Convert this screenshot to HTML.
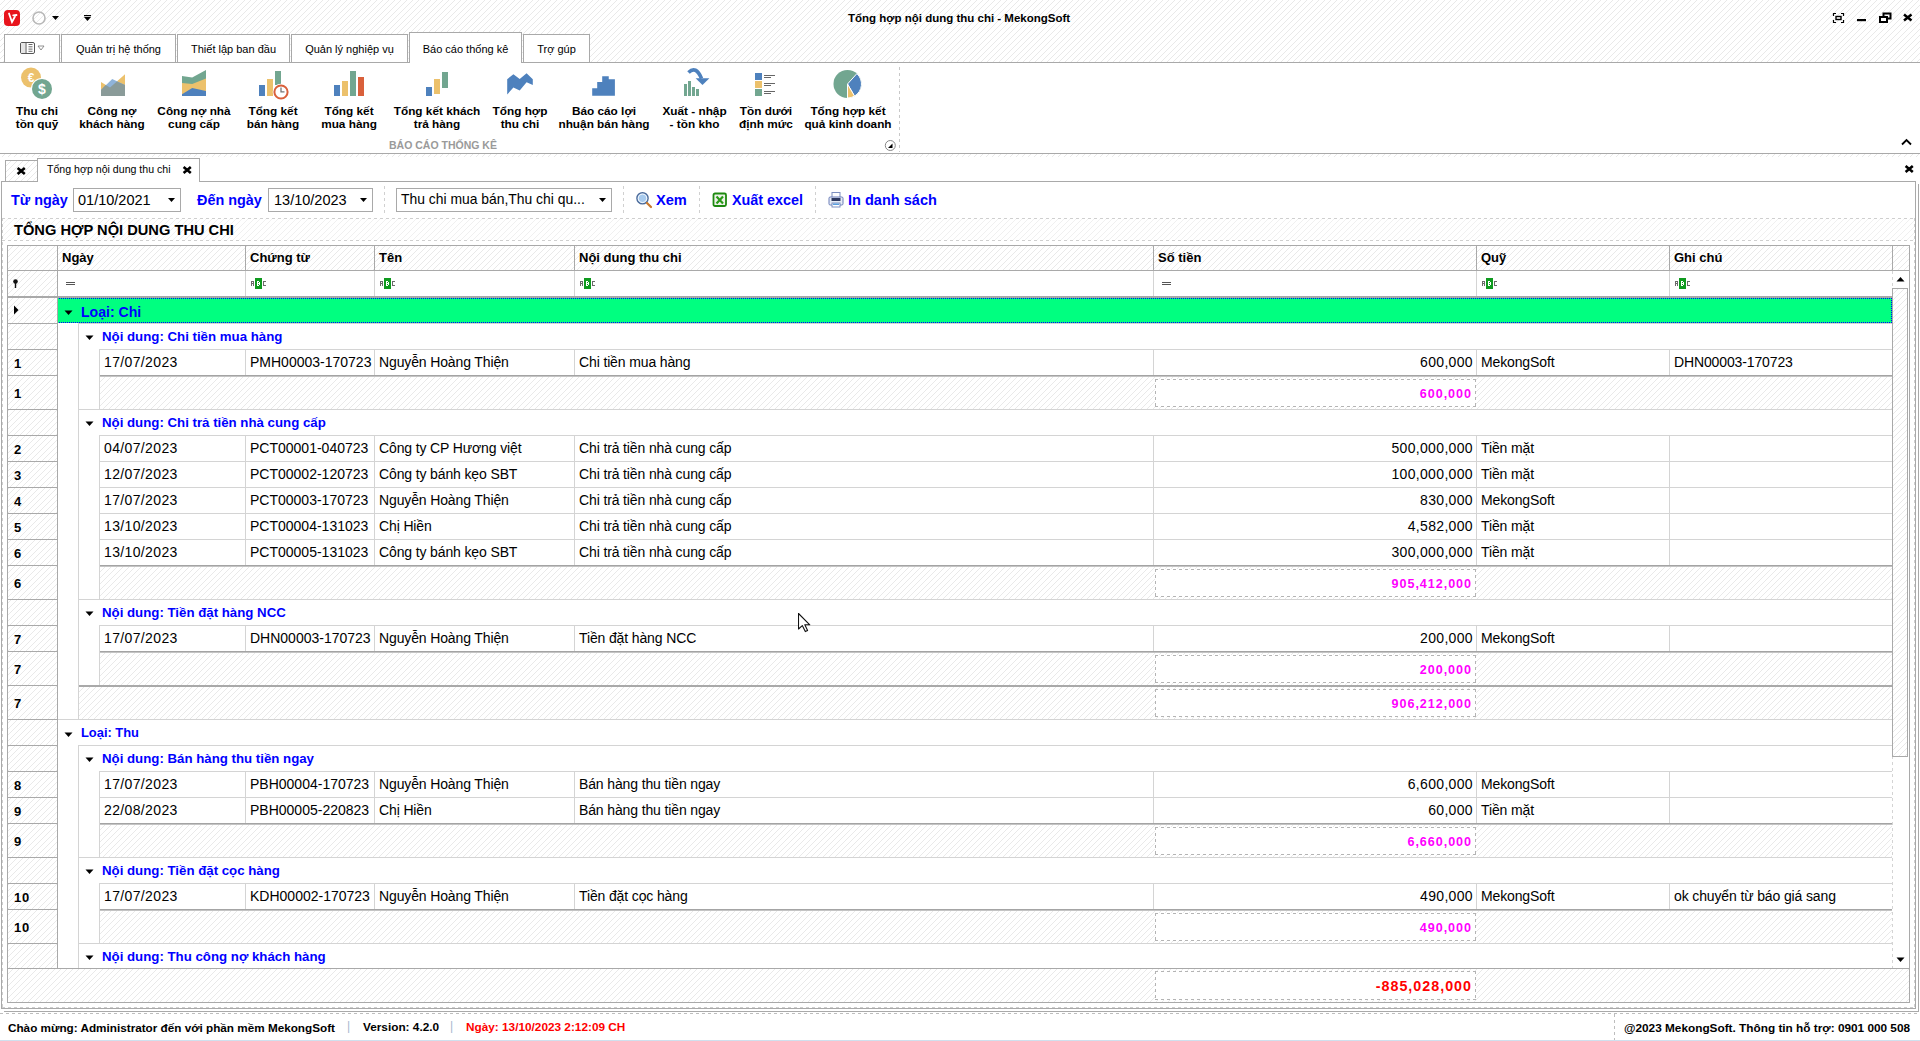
<!DOCTYPE html><html><head><meta charset="utf-8"><title>MekongSoft</title><style>
*{margin:0;padding:0;box-sizing:border-box}
html,body{width:1920px;height:1041px;overflow:hidden;background:#fff;font-family:"Liberation Sans",sans-serif;color:#000}
div{position:absolute}
.h{background:repeating-linear-gradient(135deg,#fff 0px,#fff 3.25px,#e9e9e9 3.25px,#e9e9e9 3.85px,#fff 3.85px,#fff 4.2426px)}
.h2{background:repeating-linear-gradient(135deg,#fff 0px,#fff 3.25px,#f0f0f0 3.25px,#f0f0f0 3.85px,#fff 3.85px,#fff 4.2426px)}
.t{white-space:nowrap;line-height:1}
.b{font-weight:bold}
</style></head><body>
<div class="h" style="left:0px;top:0px;width:1920px;height:62px;"></div>
<svg style="position:absolute;left:4px;top:10px" width="17" height="17" viewBox="0 0 17 17"><rect x="0" y="0" width="16" height="16" rx="4" fill="#e8141c"/><path d="M5 3.5 L8 12 L11.5 5.5 M9.2 5.4 L12.5 5" stroke="#fff" stroke-width="1.8" fill="none" stroke-linecap="round"/></svg>
<svg style="position:absolute;left:30px;top:9px" width="64" height="18" viewBox="0 0 64 18"><circle cx="9" cy="9" r="6" fill="none" stroke="#b8b8b8" stroke-width="1.6"/><path d="M22 7 L29 7 L25.5 11 Z" fill="#000"/><path d="M54 8 L61 8 L57.5 12 Z" fill="#000"/><rect x="54" y="6" width="7" height="1.2" fill="#000"/></svg>
<div class="t" style="left:848px;top:13px;font-size:11.5px;font-weight:bold">Tổng hợp nội dung thu chi - MekongSoft</div>
<svg style="position:absolute;left:1830px;top:10px" width="90" height="16" viewBox="0 0 90 16"><path d="M3.5 6 V3.5 H6 M11 3.5 H13.5 V6 M13.5 10 V12.5 H11 M6 12.5 H3.5 V10" stroke="#000" stroke-width="1.2" fill="none"/><rect x="6" y="6.5" width="5" height="3" fill="none" stroke="#000" stroke-width="1.4"/><rect x="27" y="9" width="9" height="2.2" fill="#000"/><rect x="53.5" y="3.5" width="7" height="5" fill="none" stroke="#000" stroke-width="2"/><rect x="50" y="7" width="7" height="5" fill="#fff" stroke="#000" stroke-width="2"/><path d="M74 4.5 L81.5 10.5 M81.5 4.5 L74 10.5" stroke="#000" stroke-width="2.5"/></svg>
<div style="left:4px;top:34px;width:56px;height:28px;background:#fff;border:1px solid #a9a9a9;border-bottom:none"></div>
<div style="left:61px;top:34px;width:115px;height:28px;background:#fff;border:1px solid #a9a9a9;border-bottom:none"></div>
<div class="t" style="left:61px;top:44px;width:115px;text-align:center;font-size:11px">Quản trị hệ thống</div>
<div style="left:177px;top:34px;width:113px;height:28px;background:#fff;border:1px solid #a9a9a9;border-bottom:none"></div>
<div class="t" style="left:177px;top:44px;width:113px;text-align:center;font-size:11px">Thiết lập ban đầu</div>
<div style="left:291px;top:34px;width:117px;height:28px;background:#fff;border:1px solid #a9a9a9;border-bottom:none"></div>
<div class="t" style="left:291px;top:44px;width:117px;text-align:center;font-size:11px">Quản lý nghiệp vụ</div>
<div style="left:409px;top:32px;width:113px;height:31px;background:#fff;border:1px solid #a9a9a9;border-bottom:none"></div>
<div class="t" style="left:409px;top:44px;width:113px;text-align:center;font-size:11px">Báo cáo thống kê</div>
<div style="left:523px;top:34px;width:67px;height:28px;background:#fff;border:1px solid #a9a9a9;border-bottom:none"></div>
<div class="t" style="left:523px;top:44px;width:67px;text-align:center;font-size:11px">Trợ gúp</div>
<svg style="position:absolute;left:19px;top:41px" width="28" height="14" viewBox="0 0 28 14"><rect x="1.5" y="1.5" width="14" height="11" rx="1.5" fill="#fff" stroke="#555" stroke-width="1"/><rect x="2" y="2" width="4" height="10" fill="#e6e6e6"/><line x1="7" y1="2" x2="7" y2="12" stroke="#555"/><path d="M9.5 3.5h4M9.5 5.8h4M9.5 8.1h4M9.5 10.3h4" stroke="#444" stroke-width="0.8"/><path d="M19 5 L25 5 L22 9 Z" fill="#fff" stroke="#777" stroke-width="0.8"/></svg>
<div style="left:0px;top:62px;width:410px;height:1px;background:#a9a9a9"></div>
<div style="left:521px;top:62px;width:1399px;height:1px;background:#a9a9a9"></div>
<div style="left:0px;top:153px;width:1920px;height:1px;background:#a9a9a9"></div>
<div class="t" style="left:-23px;top:106px;width:120px;text-align:center;font-size:11.8px;font-weight:bold">Thu chi</div>
<div class="t" style="left:-23px;top:119px;width:120px;text-align:center;font-size:11.8px;font-weight:bold">tồn quỹ</div>
<div class="t" style="left:52px;top:106px;width:120px;text-align:center;font-size:11.8px;font-weight:bold">Công nợ</div>
<div class="t" style="left:52px;top:119px;width:120px;text-align:center;font-size:11.8px;font-weight:bold">khách hàng</div>
<div class="t" style="left:134px;top:106px;width:120px;text-align:center;font-size:11.8px;font-weight:bold">Công nợ nhà</div>
<div class="t" style="left:134px;top:119px;width:120px;text-align:center;font-size:11.8px;font-weight:bold">cung cấp</div>
<div class="t" style="left:213px;top:106px;width:120px;text-align:center;font-size:11.8px;font-weight:bold">Tổng kết</div>
<div class="t" style="left:213px;top:119px;width:120px;text-align:center;font-size:11.8px;font-weight:bold">bán hàng</div>
<div class="t" style="left:289px;top:106px;width:120px;text-align:center;font-size:11.8px;font-weight:bold">Tổng kết</div>
<div class="t" style="left:289px;top:119px;width:120px;text-align:center;font-size:11.8px;font-weight:bold">mua hàng</div>
<div class="t" style="left:377px;top:106px;width:120px;text-align:center;font-size:11.8px;font-weight:bold">Tổng kết khách</div>
<div class="t" style="left:377px;top:119px;width:120px;text-align:center;font-size:11.8px;font-weight:bold">trả hàng</div>
<div class="t" style="left:460px;top:106px;width:120px;text-align:center;font-size:11.8px;font-weight:bold">Tổng hợp</div>
<div class="t" style="left:460px;top:119px;width:120px;text-align:center;font-size:11.8px;font-weight:bold">thu chi</div>
<div class="t" style="left:544px;top:106px;width:120px;text-align:center;font-size:11.8px;font-weight:bold">Báo cáo lợi</div>
<div class="t" style="left:544px;top:119px;width:120px;text-align:center;font-size:11.8px;font-weight:bold">nhuận bán hàng</div>
<div class="t" style="left:634.5px;top:106px;width:120px;text-align:center;font-size:11.8px;font-weight:bold">Xuất - nhập</div>
<div class="t" style="left:634.5px;top:119px;width:120px;text-align:center;font-size:11.8px;font-weight:bold">- tồn kho</div>
<div class="t" style="left:706px;top:106px;width:120px;text-align:center;font-size:11.8px;font-weight:bold">Tồn dưới</div>
<div class="t" style="left:706px;top:119px;width:120px;text-align:center;font-size:11.8px;font-weight:bold">định mức</div>
<div class="t" style="left:788px;top:106px;width:120px;text-align:center;font-size:11.8px;font-weight:bold">Tổng hợp kết</div>
<div class="t" style="left:788px;top:119px;width:120px;text-align:center;font-size:11.8px;font-weight:bold">quả kinh doanh</div>
<div class="t" style="left:343px;top:140px;width:200px;text-align:center;font-size:10.5px;font-weight:bold;color:#9a9a9a">BÁO CÁO THỐNG KÊ</div>
<svg style="position:absolute;left:0;top:62px" width="900" height="92" viewBox="0 62 900 92"><circle cx="31" cy="77.6" r="10" fill="#ecc16c"/><text x="31" y="82" font-family="Liberation Sans" font-weight="bold" font-size="12" fill="#fff" text-anchor="middle">€</text><circle cx="42" cy="88.9" r="11" fill="#fff"/><circle cx="42" cy="88.9" r="10" fill="#72a690"/><text x="42" y="94" font-family="Liberation Sans" font-weight="bold" font-size="14" fill="#fff" text-anchor="middle">$</text><polygon points="101,82 110,87.6 125,74.2 125,96 101,96" fill="#ecc16c"/><polygon points="101,90.1 112.2,78.9 125,85.1 125,96 101,96" fill="#8fb3d9"/><polygon points="101,90.1 105.6,85.1 110,87.6 116.9,81.4 125,85.1 125,96 101,96" fill="#8a9b99"/><polygon points="182,76 192.2,77.6 206,70.1 206,96 182,96" fill="#72a690"/><polygon points="182,82.9 192.2,83.9 206,78.6 206,96 182,96" fill="#ecc16c"/><polygon points="182,94.2 192.2,88 206,91 206,96 182,96" fill="#4e81bd"/><rect x="259" y="85" width="6" height="11" fill="#4e81bd"/><rect x="267" y="79" width="6" height="17" fill="#ecc16c"/><rect x="275" y="71" width="6" height="14" fill="#72a690"/><circle cx="281" cy="92" r="8.3" fill="#fff"/><circle cx="281" cy="92" r="6.6" fill="#fff" stroke="#d9603b" stroke-width="2"/><path d="M281 87.5 V91.8 H284.5" stroke="#777" stroke-width="1.3" fill="none"/><rect x="334" y="85" width="6" height="11" fill="#4e81bd"/><rect x="342" y="81" width="6" height="15" fill="#ecc16c"/><rect x="350" y="71" width="6" height="25" fill="#72a690"/><rect x="358" y="77" width="6" height="19" fill="#d9603b"/><rect x="426" y="87" width="6" height="9" fill="#4e81bd"/><rect x="434" y="79" width="6" height="15" fill="#ecc16c"/><rect x="442" y="72" width="6" height="16" fill="#72a690"/><polygon points="507.2,79.2 513.4,74.2 519.7,78.9 526.6,73.25 532.8,79.2 532.8,85.1 526.6,82.3 519.7,90.4 513.4,87.6 507.2,94.5" fill="#4e81bd"/><polygon points="592.2,88.25 597.2,88.25 597.2,82.1 602.2,82.1 602.2,76.25 608.75,76.25 608.75,79.2 614.9,79.2 614.9,95.75 592.2,95.75" fill="#4e81bd"/><rect x="684" y="84" width="3" height="12" fill="#72a690"/><rect x="688" y="81" width="3" height="15" fill="#72a690"/><rect x="692" y="87" width="3" height="9" fill="#72a690"/><rect x="696" y="89" width="3" height="7" fill="#72a690"/><path d="M688.5 72.5 Q696 65 701.5 78.5" stroke="#4e81bd" stroke-width="3.6" fill="none"/><polygon points="695.6,78.25 709.4,78.25 702.5,85.1" fill="#4e81bd"/><rect x="755" y="73" width="7" height="7" fill="#4e81bd"/><rect x="755" y="81" width="7" height="7" fill="#ecc16c"/><rect x="755" y="89" width="7" height="7" fill="#72a690"/><path d="M764 75.5h11M764 77.5h7M764 83.5h11M764 85.5h7M764 91.5h11M764 93.5h7" stroke="#666" stroke-width="1"/><circle cx="847.5" cy="84" r="14" fill="#72a690"/><path d="M847.5 84 L856.9 73.6 A14 14 0 0 1 854.5 96.1 Z" fill="#4e81bd" stroke="#fff" stroke-width="1"/><path d="M847.5 84 L854.5 96.1 A14 14 0 0 1 847.5 98 Z" fill="#ecc16c" stroke="#fff" stroke-width="1"/><circle cx="890.3" cy="145.5" r="5" fill="#fff" stroke="#888" stroke-width="1"/><polygon points="888,148 892.5,148 892.5,143.5" fill="#000"/><line x1="899.5" y1="67" x2="899.5" y2="152" stroke="#c8c8c8" stroke-width="1" stroke-dasharray="3,3"/></svg>
<svg style="position:absolute;left:1900px;top:137px" width="14" height="10" viewBox="0 0 14 10"><path d="M2 7.5 L6.5 3 L11 7.5" stroke="#000" stroke-width="1.8" fill="none"/></svg>
<div class="h" style="left:0px;top:154px;width:1920px;height:3px;"></div>
<div class="h" style="left:5px;top:160px;width:33px;height:22px;border:1px solid #a9a9a9;border-bottom:none"></div>
<svg style="position:absolute;left:16px;top:166px" width="12" height="10" viewBox="0 0 12 10"><path d="M1.6 2.0 L8.8 8.0 M8.8 2.0 L1.6 8.0" stroke="#000" stroke-width="2.6"/></svg>
<div style="left:37px;top:158px;width:163px;height:24px;background:#fff;border:1px solid #a9a9a9;border-bottom:none"></div>
<div class="t" style="left:47px;top:164px;font-size:10.6px">Tổng hợp nội dung thu chi</div>
<svg style="position:absolute;left:182px;top:165px" width="12" height="10" viewBox="0 0 12 10"><path d="M1.6 2.0 L8.8 8.0 M8.8 2.0 L1.6 8.0" stroke="#000" stroke-width="2.6"/></svg>
<svg style="position:absolute;left:1904px;top:164px" width="12" height="10" viewBox="0 0 12 10"><path d="M1.6 2.0 L8.8 8.0 M8.8 2.0 L1.6 8.0" stroke="#000" stroke-width="2.6"/></svg>
<div style="left:1px;top:181px;width:1915px;height:828px;background:#fff;border:1px solid #a9a9a9"></div>
<div style="left:1918px;top:184px;width:1px;height:828px;background:#a9a9a9"></div>
<div style="left:38px;top:181px;width:161px;height:1px;background:#fff"></div>
<div style="left:4px;top:1011px;width:1915px;height:1px;background:#a9a9a9"></div>
<div class="t" style="left:11px;top:193px;font-size:14.4px;font-weight:bold;color:#0000ff">Từ ngày</div>
<div style="left:73px;top:188px;width:108px;height:24px;border:1px solid #a9a9a9;background:#fff"></div>
<div class="t" style="left:78px;top:193px;font-size:14.5px">01/10/2021</div>
<svg style="position:absolute;left:168px;top:198px" width="8" height="5"><path d="M0 0 H7 L3.5 4 Z" fill="#000"/></svg>
<div class="t" style="left:197px;top:193px;font-size:14.4px;font-weight:bold;color:#0000ff">Đến ngày</div>
<div style="left:268px;top:188px;width:105px;height:24px;border:1px solid #a9a9a9;background:#fff"></div>
<div class="t" style="left:274px;top:193px;font-size:14.5px">13/10/2023</div>
<svg style="position:absolute;left:360px;top:198px" width="8" height="5"><path d="M0 0 H7 L3.5 4 Z" fill="#000"/></svg>
<div style="left:384px;top:186px;width:1px;height:30px;background:repeating-linear-gradient(180deg,#d0d0d0 0 3px,transparent 3px 6px)"></div>
<div style="left:396px;top:188px;width:216px;height:24px;border:1px solid #a9a9a9;background:#fff"></div>
<div class="t" style="left:401px;top:193px;font-size:13.9px">Thu chi mua bán,Thu chi qu...</div>
<svg style="position:absolute;left:599px;top:198px" width="8" height="5"><path d="M0 0 H7 L3.5 4 Z" fill="#000"/></svg>
<div style="left:623px;top:186px;width:1px;height:30px;background:repeating-linear-gradient(180deg,#d0d0d0 0 3px,transparent 3px 6px)"></div>
<svg style="position:absolute;left:634px;top:190px" width="20" height="20" viewBox="634 190 20 20"><circle cx="642.5" cy="198.3" r="5.6" fill="#cfe2f6" stroke="#4a6a9a" stroke-width="1.4"/><circle cx="642.5" cy="198.3" r="4.2" fill="#a8cbee" stroke="#fff" stroke-width="0.8"/><path d="M647 203 L651 207" stroke="#c8782c" stroke-width="2.2" stroke-linecap="round"/></svg>
<div class="t" style="left:656px;top:193px;font-size:14.6px;font-weight:bold;color:#0000ff">Xem</div>
<div style="left:699px;top:186px;width:1px;height:30px;background:repeating-linear-gradient(180deg,#d0d0d0 0 3px,transparent 3px 6px)"></div>
<svg style="position:absolute;left:712px;top:192px" width="16" height="16" viewBox="0 0 16 16"><rect x="1.5" y="1.5" width="12.5" height="12.5" rx="1.5" fill="#eef2ea" stroke="#1e8a10" stroke-width="1.8"/><path d="M4.5 4.5 L11 11.5 M11 4.5 L4.5 11.5" stroke="#2a9a18" stroke-width="2.2"/></svg>
<div class="t" style="left:732px;top:193px;font-size:14.35px;font-weight:bold;color:#0000ff">Xuất excel</div>
<div style="left:815px;top:186px;width:1px;height:30px;background:repeating-linear-gradient(180deg,#d0d0d0 0 3px,transparent 3px 6px)"></div>
<svg style="position:absolute;left:828px;top:191px" width="16" height="17" viewBox="0 0 16 17"><rect x="4" y="1.5" width="8" height="7" fill="#fff" stroke="#7d8fc0" stroke-width="1"/><rect x="1" y="6" width="14" height="8" rx="1.2" fill="#e6ecf6" stroke="#6a7db8" stroke-width="1"/><rect x="3.5" y="7" width="9" height="3" fill="#2e3a60"/><rect x="4" y="12" width="8" height="4" fill="#fff" stroke="#7d8fc0" stroke-width="1"/><rect x="5" y="12.5" width="6" height="1.5" fill="#5aa0e0"/></svg>
<div class="t" style="left:848px;top:193px;font-size:14.56px;font-weight:bold;color:#0000ff">In danh sách</div>
<div style="left:2px;top:218px;width:1914px;height:1px;background:repeating-linear-gradient(90deg,#cfcfcf 0 3px,transparent 3px 6px)"></div>
<div class="h2" style="left:3px;top:219px;width:1911px;height:21px;"></div>
<div style="left:2px;top:240px;width:1914px;height:1px;background:repeating-linear-gradient(90deg,#cfcfcf 0 3px,transparent 3px 6px)"></div>
<div class="t" style="left:14px;top:223px;font-size:14.67px;font-weight:bold">TỔNG HỢP NỘI DUNG THU CHI</div>
<div style="left:2px;top:218px;width:1px;height:790px;background:repeating-linear-gradient(180deg,#cfcfcf 0 3px,transparent 3px 6px)"></div>
<div style="left:1914px;top:218px;width:1px;height:790px;background:repeating-linear-gradient(180deg,#cfcfcf 0 3px,transparent 3px 6px)"></div>
<div style="left:7px;top:245px;width:1903px;height:758px;border:1px solid #a9a9a9;background:#fff"></div>
<div class="h" style="left:8px;top:246px;width:1884px;height:24px;"></div>
<div class="h" style="left:1893px;top:246px;width:16px;height:24px;"></div>
<div style="left:7px;top:270px;width:1902px;height:1px;background:#a9a9a9"></div>
<div style="left:57px;top:246px;width:1px;height:24px;background:#a9a9a9"></div>
<div style="left:245px;top:246px;width:1px;height:24px;background:#a9a9a9"></div>
<div style="left:374px;top:246px;width:1px;height:24px;background:#a9a9a9"></div>
<div style="left:574px;top:246px;width:1px;height:24px;background:#a9a9a9"></div>
<div style="left:1153px;top:246px;width:1px;height:24px;background:#a9a9a9"></div>
<div style="left:1476px;top:246px;width:1px;height:24px;background:#a9a9a9"></div>
<div style="left:1669px;top:246px;width:1px;height:24px;background:#a9a9a9"></div>
<div style="left:1892px;top:246px;width:1px;height:24px;background:#a9a9a9"></div>
<div class="t" style="left:62px;top:251px;font-size:13px;font-weight:bold">Ngày</div>
<div class="t" style="left:250px;top:251px;font-size:13px;font-weight:bold">Chứng từ</div>
<div class="t" style="left:379px;top:251px;font-size:13px;font-weight:bold">Tên</div>
<div class="t" style="left:579px;top:251px;font-size:13px;font-weight:bold">Nội dung thu chi</div>
<div class="t" style="left:1158px;top:251px;font-size:13px;font-weight:bold">Số tiền</div>
<div class="t" style="left:1481px;top:251px;font-size:13px;font-weight:bold">Quỹ</div>
<div class="t" style="left:1674px;top:251px;font-size:13px;font-weight:bold">Ghi chú</div>
<div class="h" style="left:8px;top:271px;width:49px;height:25px;"></div>
<div style="left:57px;top:271px;width:1px;height:26px;background:#a9a9a9"></div>
<div style="left:245px;top:271px;width:1px;height:25px;background:#d4d4d4"></div>
<div style="left:374px;top:271px;width:1px;height:25px;background:#d4d4d4"></div>
<div style="left:574px;top:271px;width:1px;height:25px;background:#d4d4d4"></div>
<div style="left:1153px;top:271px;width:1px;height:25px;background:#d4d4d4"></div>
<div style="left:1476px;top:271px;width:1px;height:25px;background:#d4d4d4"></div>
<div style="left:1669px;top:271px;width:1px;height:25px;background:#d4d4d4"></div>
<div style="left:1892px;top:271px;width:1px;height:18px;background:repeating-linear-gradient(180deg,#d4d4d4 0 3px,transparent 3px 6px)"></div>
<div style="left:7px;top:296px;width:1885px;height:2px;background:#a9a9a9"></div>
<svg style="position:absolute;left:11px;top:278px" width="10" height="12" viewBox="0 0 10 12"><circle cx="4.5" cy="3.5" r="2.3" fill="#111"/><rect x="3.8" y="4" width="1.4" height="6" fill="#111"/></svg>
<svg style="position:absolute;left:66px;top:281px" width="12" height="6" viewBox="0 0 12 6"><path d="M0 1.5h9M0 3.5h9" stroke="#555" stroke-width="1"/></svg>
<svg style="position:absolute;left:251px;top:278px" width="16" height="11" viewBox="0 0 16 11" shape-rendering="crispEdges"><rect x="0" y="3" width="1" height="1" fill="#6a6a6a"/><rect x="1" y="3" width="1" height="1" fill="#6a6a6a"/><rect x="2" y="3" width="1" height="1" fill="#6a6a6a"/><rect x="0" y="4" width="1" height="1" fill="#6a6a6a"/><rect x="2" y="4" width="1" height="1" fill="#6a6a6a"/><rect x="0" y="5" width="1" height="1" fill="#6a6a6a"/><rect x="1" y="5" width="1" height="1" fill="#6a6a6a"/><rect x="2" y="5" width="1" height="1" fill="#6a6a6a"/><rect x="0" y="6" width="1" height="1" fill="#6a6a6a"/><rect x="2" y="6" width="1" height="1" fill="#6a6a6a"/><rect x="0" y="7" width="1" height="1" fill="#6a6a6a"/><rect x="2" y="7" width="1" height="1" fill="#6a6a6a"/><rect x="4" y="0" width="7" height="11" rx="1" fill="#0f9a1f"/><rect x="6" y="3" width="1" height="1" fill="#fff"/><rect x="7" y="3" width="1" height="1" fill="#fff"/><rect x="6" y="4" width="1" height="1" fill="#fff"/><rect x="8" y="4" width="1" height="1" fill="#fff"/><rect x="6" y="5" width="1" height="1" fill="#fff"/><rect x="7" y="5" width="1" height="1" fill="#fff"/><rect x="8" y="5" width="1" height="1" fill="#fff"/><rect x="6" y="6" width="1" height="1" fill="#fff"/><rect x="8" y="6" width="1" height="1" fill="#fff"/><rect x="6" y="7" width="1" height="1" fill="#fff"/><rect x="7" y="7" width="1" height="1" fill="#fff"/><rect x="12" y="3" width="1" height="1" fill="#6a6a6a"/><rect x="13" y="3" width="1" height="1" fill="#6a6a6a"/><rect x="14" y="3" width="1" height="1" fill="#6a6a6a"/><rect x="12" y="4" width="1" height="1" fill="#6a6a6a"/><rect x="12" y="5" width="1" height="1" fill="#6a6a6a"/><rect x="12" y="6" width="1" height="1" fill="#6a6a6a"/><rect x="12" y="7" width="1" height="1" fill="#6a6a6a"/><rect x="13" y="7" width="1" height="1" fill="#6a6a6a"/><rect x="14" y="7" width="1" height="1" fill="#6a6a6a"/></svg>
<svg style="position:absolute;left:380px;top:278px" width="16" height="11" viewBox="0 0 16 11" shape-rendering="crispEdges"><rect x="0" y="3" width="1" height="1" fill="#6a6a6a"/><rect x="1" y="3" width="1" height="1" fill="#6a6a6a"/><rect x="2" y="3" width="1" height="1" fill="#6a6a6a"/><rect x="0" y="4" width="1" height="1" fill="#6a6a6a"/><rect x="2" y="4" width="1" height="1" fill="#6a6a6a"/><rect x="0" y="5" width="1" height="1" fill="#6a6a6a"/><rect x="1" y="5" width="1" height="1" fill="#6a6a6a"/><rect x="2" y="5" width="1" height="1" fill="#6a6a6a"/><rect x="0" y="6" width="1" height="1" fill="#6a6a6a"/><rect x="2" y="6" width="1" height="1" fill="#6a6a6a"/><rect x="0" y="7" width="1" height="1" fill="#6a6a6a"/><rect x="2" y="7" width="1" height="1" fill="#6a6a6a"/><rect x="4" y="0" width="7" height="11" rx="1" fill="#0f9a1f"/><rect x="6" y="3" width="1" height="1" fill="#fff"/><rect x="7" y="3" width="1" height="1" fill="#fff"/><rect x="6" y="4" width="1" height="1" fill="#fff"/><rect x="8" y="4" width="1" height="1" fill="#fff"/><rect x="6" y="5" width="1" height="1" fill="#fff"/><rect x="7" y="5" width="1" height="1" fill="#fff"/><rect x="8" y="5" width="1" height="1" fill="#fff"/><rect x="6" y="6" width="1" height="1" fill="#fff"/><rect x="8" y="6" width="1" height="1" fill="#fff"/><rect x="6" y="7" width="1" height="1" fill="#fff"/><rect x="7" y="7" width="1" height="1" fill="#fff"/><rect x="12" y="3" width="1" height="1" fill="#6a6a6a"/><rect x="13" y="3" width="1" height="1" fill="#6a6a6a"/><rect x="14" y="3" width="1" height="1" fill="#6a6a6a"/><rect x="12" y="4" width="1" height="1" fill="#6a6a6a"/><rect x="12" y="5" width="1" height="1" fill="#6a6a6a"/><rect x="12" y="6" width="1" height="1" fill="#6a6a6a"/><rect x="12" y="7" width="1" height="1" fill="#6a6a6a"/><rect x="13" y="7" width="1" height="1" fill="#6a6a6a"/><rect x="14" y="7" width="1" height="1" fill="#6a6a6a"/></svg>
<svg style="position:absolute;left:580px;top:278px" width="16" height="11" viewBox="0 0 16 11" shape-rendering="crispEdges"><rect x="0" y="3" width="1" height="1" fill="#6a6a6a"/><rect x="1" y="3" width="1" height="1" fill="#6a6a6a"/><rect x="2" y="3" width="1" height="1" fill="#6a6a6a"/><rect x="0" y="4" width="1" height="1" fill="#6a6a6a"/><rect x="2" y="4" width="1" height="1" fill="#6a6a6a"/><rect x="0" y="5" width="1" height="1" fill="#6a6a6a"/><rect x="1" y="5" width="1" height="1" fill="#6a6a6a"/><rect x="2" y="5" width="1" height="1" fill="#6a6a6a"/><rect x="0" y="6" width="1" height="1" fill="#6a6a6a"/><rect x="2" y="6" width="1" height="1" fill="#6a6a6a"/><rect x="0" y="7" width="1" height="1" fill="#6a6a6a"/><rect x="2" y="7" width="1" height="1" fill="#6a6a6a"/><rect x="4" y="0" width="7" height="11" rx="1" fill="#0f9a1f"/><rect x="6" y="3" width="1" height="1" fill="#fff"/><rect x="7" y="3" width="1" height="1" fill="#fff"/><rect x="6" y="4" width="1" height="1" fill="#fff"/><rect x="8" y="4" width="1" height="1" fill="#fff"/><rect x="6" y="5" width="1" height="1" fill="#fff"/><rect x="7" y="5" width="1" height="1" fill="#fff"/><rect x="8" y="5" width="1" height="1" fill="#fff"/><rect x="6" y="6" width="1" height="1" fill="#fff"/><rect x="8" y="6" width="1" height="1" fill="#fff"/><rect x="6" y="7" width="1" height="1" fill="#fff"/><rect x="7" y="7" width="1" height="1" fill="#fff"/><rect x="12" y="3" width="1" height="1" fill="#6a6a6a"/><rect x="13" y="3" width="1" height="1" fill="#6a6a6a"/><rect x="14" y="3" width="1" height="1" fill="#6a6a6a"/><rect x="12" y="4" width="1" height="1" fill="#6a6a6a"/><rect x="12" y="5" width="1" height="1" fill="#6a6a6a"/><rect x="12" y="6" width="1" height="1" fill="#6a6a6a"/><rect x="12" y="7" width="1" height="1" fill="#6a6a6a"/><rect x="13" y="7" width="1" height="1" fill="#6a6a6a"/><rect x="14" y="7" width="1" height="1" fill="#6a6a6a"/></svg>
<svg style="position:absolute;left:1162px;top:281px" width="12" height="6" viewBox="0 0 12 6"><path d="M0 1.5h9M0 3.5h9" stroke="#555" stroke-width="1"/></svg>
<svg style="position:absolute;left:1482px;top:278px" width="16" height="11" viewBox="0 0 16 11" shape-rendering="crispEdges"><rect x="0" y="3" width="1" height="1" fill="#6a6a6a"/><rect x="1" y="3" width="1" height="1" fill="#6a6a6a"/><rect x="2" y="3" width="1" height="1" fill="#6a6a6a"/><rect x="0" y="4" width="1" height="1" fill="#6a6a6a"/><rect x="2" y="4" width="1" height="1" fill="#6a6a6a"/><rect x="0" y="5" width="1" height="1" fill="#6a6a6a"/><rect x="1" y="5" width="1" height="1" fill="#6a6a6a"/><rect x="2" y="5" width="1" height="1" fill="#6a6a6a"/><rect x="0" y="6" width="1" height="1" fill="#6a6a6a"/><rect x="2" y="6" width="1" height="1" fill="#6a6a6a"/><rect x="0" y="7" width="1" height="1" fill="#6a6a6a"/><rect x="2" y="7" width="1" height="1" fill="#6a6a6a"/><rect x="4" y="0" width="7" height="11" rx="1" fill="#0f9a1f"/><rect x="6" y="3" width="1" height="1" fill="#fff"/><rect x="7" y="3" width="1" height="1" fill="#fff"/><rect x="6" y="4" width="1" height="1" fill="#fff"/><rect x="8" y="4" width="1" height="1" fill="#fff"/><rect x="6" y="5" width="1" height="1" fill="#fff"/><rect x="7" y="5" width="1" height="1" fill="#fff"/><rect x="8" y="5" width="1" height="1" fill="#fff"/><rect x="6" y="6" width="1" height="1" fill="#fff"/><rect x="8" y="6" width="1" height="1" fill="#fff"/><rect x="6" y="7" width="1" height="1" fill="#fff"/><rect x="7" y="7" width="1" height="1" fill="#fff"/><rect x="12" y="3" width="1" height="1" fill="#6a6a6a"/><rect x="13" y="3" width="1" height="1" fill="#6a6a6a"/><rect x="14" y="3" width="1" height="1" fill="#6a6a6a"/><rect x="12" y="4" width="1" height="1" fill="#6a6a6a"/><rect x="12" y="5" width="1" height="1" fill="#6a6a6a"/><rect x="12" y="6" width="1" height="1" fill="#6a6a6a"/><rect x="12" y="7" width="1" height="1" fill="#6a6a6a"/><rect x="13" y="7" width="1" height="1" fill="#6a6a6a"/><rect x="14" y="7" width="1" height="1" fill="#6a6a6a"/></svg>
<svg style="position:absolute;left:1675px;top:278px" width="16" height="11" viewBox="0 0 16 11" shape-rendering="crispEdges"><rect x="0" y="3" width="1" height="1" fill="#6a6a6a"/><rect x="1" y="3" width="1" height="1" fill="#6a6a6a"/><rect x="2" y="3" width="1" height="1" fill="#6a6a6a"/><rect x="0" y="4" width="1" height="1" fill="#6a6a6a"/><rect x="2" y="4" width="1" height="1" fill="#6a6a6a"/><rect x="0" y="5" width="1" height="1" fill="#6a6a6a"/><rect x="1" y="5" width="1" height="1" fill="#6a6a6a"/><rect x="2" y="5" width="1" height="1" fill="#6a6a6a"/><rect x="0" y="6" width="1" height="1" fill="#6a6a6a"/><rect x="2" y="6" width="1" height="1" fill="#6a6a6a"/><rect x="0" y="7" width="1" height="1" fill="#6a6a6a"/><rect x="2" y="7" width="1" height="1" fill="#6a6a6a"/><rect x="4" y="0" width="7" height="11" rx="1" fill="#0f9a1f"/><rect x="6" y="3" width="1" height="1" fill="#fff"/><rect x="7" y="3" width="1" height="1" fill="#fff"/><rect x="6" y="4" width="1" height="1" fill="#fff"/><rect x="8" y="4" width="1" height="1" fill="#fff"/><rect x="6" y="5" width="1" height="1" fill="#fff"/><rect x="7" y="5" width="1" height="1" fill="#fff"/><rect x="8" y="5" width="1" height="1" fill="#fff"/><rect x="6" y="6" width="1" height="1" fill="#fff"/><rect x="8" y="6" width="1" height="1" fill="#fff"/><rect x="6" y="7" width="1" height="1" fill="#fff"/><rect x="7" y="7" width="1" height="1" fill="#fff"/><rect x="12" y="3" width="1" height="1" fill="#6a6a6a"/><rect x="13" y="3" width="1" height="1" fill="#6a6a6a"/><rect x="14" y="3" width="1" height="1" fill="#6a6a6a"/><rect x="12" y="4" width="1" height="1" fill="#6a6a6a"/><rect x="12" y="5" width="1" height="1" fill="#6a6a6a"/><rect x="12" y="6" width="1" height="1" fill="#6a6a6a"/><rect x="12" y="7" width="1" height="1" fill="#6a6a6a"/><rect x="13" y="7" width="1" height="1" fill="#6a6a6a"/><rect x="14" y="7" width="1" height="1" fill="#6a6a6a"/></svg>
<div class="h" style="left:8px;top:298px;width:49px;height:670px;"></div>
<div style="left:57px;top:298px;width:1835px;height:25px;background:#00ff80;border:1px dotted #0000ff"></div>
<svg style="position:absolute;left:13px;top:305px" width="7" height="10" viewBox="0 0 7 10"><path d="M1 0.5 L5.5 5 L1 9.5 Z" fill="#000"/></svg>
<svg style="position:absolute;left:64px;top:310px" width="10" height="6" viewBox="0 0 10 6"><path d="M0.5 0.5 H8.5 L4.5 5 Z" fill="#000"/></svg>
<div class="t" style="left:81px;top:305px;font-size:14.1px;font-weight:bold;color:#0000ff">Loại: Chi</div>
<div style="left:7px;top:323px;width:50px;height:1px;background:#a9a9a9"></div>
<div style="left:78px;top:323px;width:1814px;height:1px;background:#d4d4d4"></div>
<div style="left:78px;top:323px;width:1px;height:26px;background:#d4d4d4"></div>
<svg style="position:absolute;left:85px;top:335px" width="10" height="6" viewBox="0 0 10 6"><path d="M0.5 0.5 H8.5 L4.5 5 Z" fill="#000"/></svg>
<div class="t" style="left:102px;top:330px;font-size:13.25px;font-weight:bold;color:#0000ff">Nội dung: Chi tiền mua hàng</div>
<div style="left:7px;top:349px;width:50px;height:1px;background:#a9a9a9"></div>
<div style="left:99px;top:349px;width:1793px;height:1px;background:#d4d4d4"></div>
<div style="left:78px;top:349px;width:1px;height:26px;background:#d4d4d4"></div>
<div style="left:99px;top:349px;width:1px;height:26px;background:#d4d4d4"></div>
<div style="left:245px;top:349px;width:1px;height:26px;background:#d4d4d4"></div>
<div style="left:374px;top:349px;width:1px;height:26px;background:#d4d4d4"></div>
<div style="left:574px;top:349px;width:1px;height:26px;background:#d4d4d4"></div>
<div style="left:1153px;top:349px;width:1px;height:26px;background:#d4d4d4"></div>
<div style="left:1476px;top:349px;width:1px;height:26px;background:#d4d4d4"></div>
<div style="left:1669px;top:349px;width:1px;height:26px;background:#d4d4d4"></div>
<div class="t" style="left:104px;top:355px;font-size:14px;letter-spacing:0.36px">17/07/2023</div>
<div class="t" style="left:250px;top:355px;font-size:14px">PMH00003-170723</div>
<div class="t" style="left:379px;top:355px;font-size:14px;letter-spacing:-0.13px">Nguyễn Hoàng Thiện</div>
<div class="t" style="left:579px;top:355px;font-size:14px;letter-spacing:-0.13px">Chi tiền mua hàng</div>
<div class="t" style="left:1153px;top:355px;width:320px;text-align:right;font-size:14px;letter-spacing:0.34px;padding-right:0">600,000</div>
<div class="t" style="left:1481px;top:355px;font-size:14px;letter-spacing:-0.13px">MekongSoft</div>
<div class="t" style="left:1674px;top:355px;font-size:14px;letter-spacing:-0.13px">DHN00003-170723</div>
<div style="left:99px;top:375px;width:1793px;height:1px;background:#a4a4a4"></div>
<div style="left:99px;top:376px;width:1793px;height:1px;background:#c4c4c4"></div>
<div style="left:7px;top:375px;width:50px;height:1px;background:#a9a9a9"></div>
<div class="t" style="left:14px;top:357px;font-size:13px;font-weight:bold;letter-spacing:0.8px">1</div>
<div class="h" style="left:100px;top:377px;width:1792px;height:32px;"></div>
<div style="left:78px;top:375px;width:1px;height:34px;background:#d4d4d4"></div>
<div style="left:99px;top:375px;width:1px;height:34px;background:#d4d4d4"></div>
<div style="left:1155px;top:379px;width:321px;height:28px;background:#fff"></div>
<div style="left:1155px;top:379px;width:321px;height:1px;background:repeating-linear-gradient(90deg,#b4b4b4 0 3px,transparent 3px 6px)"></div>
<div style="left:1155px;top:406px;width:321px;height:1px;background:repeating-linear-gradient(90deg,#b4b4b4 0 3px,transparent 3px 6px)"></div>
<div style="left:1155px;top:379px;width:1px;height:28px;background:repeating-linear-gradient(180deg,#b4b4b4 0 3px,transparent 3px 6px)"></div>
<div style="left:1475px;top:379px;width:1px;height:28px;background:repeating-linear-gradient(180deg,#b4b4b4 0 3px,transparent 3px 6px)"></div>
<div class="t" style="left:1155px;top:388px;width:317px;text-align:right;font-size:12.6px;letter-spacing:0.95px;font-weight:bold;color:#ff00ff">600,000</div>
<div style="left:78px;top:409px;width:1814px;height:1px;background:#d4d4d4"></div>
<div style="left:7px;top:409px;width:50px;height:1px;background:#a9a9a9"></div>
<div class="t" style="left:14px;top:387px;font-size:13px;font-weight:bold;letter-spacing:0.8px">1</div>
<div style="left:78px;top:409px;width:1814px;height:1px;background:#d4d4d4"></div>
<div style="left:78px;top:409px;width:1px;height:26px;background:#d4d4d4"></div>
<svg style="position:absolute;left:85px;top:421px" width="10" height="6" viewBox="0 0 10 6"><path d="M0.5 0.5 H8.5 L4.5 5 Z" fill="#000"/></svg>
<div class="t" style="left:102px;top:416px;font-size:13.25px;font-weight:bold;color:#0000ff">Nội dung: Chi trả tiền nhà cung cấp</div>
<div style="left:7px;top:435px;width:50px;height:1px;background:#a9a9a9"></div>
<div style="left:99px;top:435px;width:1793px;height:1px;background:#d4d4d4"></div>
<div style="left:78px;top:435px;width:1px;height:26px;background:#d4d4d4"></div>
<div style="left:99px;top:435px;width:1px;height:26px;background:#d4d4d4"></div>
<div style="left:245px;top:435px;width:1px;height:26px;background:#d4d4d4"></div>
<div style="left:374px;top:435px;width:1px;height:26px;background:#d4d4d4"></div>
<div style="left:574px;top:435px;width:1px;height:26px;background:#d4d4d4"></div>
<div style="left:1153px;top:435px;width:1px;height:26px;background:#d4d4d4"></div>
<div style="left:1476px;top:435px;width:1px;height:26px;background:#d4d4d4"></div>
<div style="left:1669px;top:435px;width:1px;height:26px;background:#d4d4d4"></div>
<div class="t" style="left:104px;top:441px;font-size:14px;letter-spacing:0.36px">04/07/2023</div>
<div class="t" style="left:250px;top:441px;font-size:14px">PCT00001-040723</div>
<div class="t" style="left:379px;top:441px;font-size:14px;letter-spacing:-0.13px">Công ty CP Hương việt</div>
<div class="t" style="left:579px;top:441px;font-size:14px;letter-spacing:-0.13px">Chi trả tiền nhà cung cấp</div>
<div class="t" style="left:1153px;top:441px;width:320px;text-align:right;font-size:14px;letter-spacing:0.34px;padding-right:0">500,000,000</div>
<div class="t" style="left:1481px;top:441px;font-size:14px;letter-spacing:-0.13px">Tiền mặt</div>
<div style="left:7px;top:461px;width:50px;height:1px;background:#a9a9a9"></div>
<div class="t" style="left:14px;top:443px;font-size:13px;font-weight:bold;letter-spacing:0.8px">2</div>
<div style="left:99px;top:461px;width:1793px;height:1px;background:#d4d4d4"></div>
<div style="left:78px;top:461px;width:1px;height:26px;background:#d4d4d4"></div>
<div style="left:99px;top:461px;width:1px;height:26px;background:#d4d4d4"></div>
<div style="left:245px;top:461px;width:1px;height:26px;background:#d4d4d4"></div>
<div style="left:374px;top:461px;width:1px;height:26px;background:#d4d4d4"></div>
<div style="left:574px;top:461px;width:1px;height:26px;background:#d4d4d4"></div>
<div style="left:1153px;top:461px;width:1px;height:26px;background:#d4d4d4"></div>
<div style="left:1476px;top:461px;width:1px;height:26px;background:#d4d4d4"></div>
<div style="left:1669px;top:461px;width:1px;height:26px;background:#d4d4d4"></div>
<div class="t" style="left:104px;top:467px;font-size:14px;letter-spacing:0.36px">12/07/2023</div>
<div class="t" style="left:250px;top:467px;font-size:14px">PCT00002-120723</div>
<div class="t" style="left:379px;top:467px;font-size:14px;letter-spacing:-0.13px">Công ty bánh kẹo SBT</div>
<div class="t" style="left:579px;top:467px;font-size:14px;letter-spacing:-0.13px">Chi trả tiền nhà cung cấp</div>
<div class="t" style="left:1153px;top:467px;width:320px;text-align:right;font-size:14px;letter-spacing:0.34px;padding-right:0">100,000,000</div>
<div class="t" style="left:1481px;top:467px;font-size:14px;letter-spacing:-0.13px">Tiền mặt</div>
<div style="left:7px;top:487px;width:50px;height:1px;background:#a9a9a9"></div>
<div class="t" style="left:14px;top:469px;font-size:13px;font-weight:bold;letter-spacing:0.8px">3</div>
<div style="left:99px;top:487px;width:1793px;height:1px;background:#d4d4d4"></div>
<div style="left:78px;top:487px;width:1px;height:26px;background:#d4d4d4"></div>
<div style="left:99px;top:487px;width:1px;height:26px;background:#d4d4d4"></div>
<div style="left:245px;top:487px;width:1px;height:26px;background:#d4d4d4"></div>
<div style="left:374px;top:487px;width:1px;height:26px;background:#d4d4d4"></div>
<div style="left:574px;top:487px;width:1px;height:26px;background:#d4d4d4"></div>
<div style="left:1153px;top:487px;width:1px;height:26px;background:#d4d4d4"></div>
<div style="left:1476px;top:487px;width:1px;height:26px;background:#d4d4d4"></div>
<div style="left:1669px;top:487px;width:1px;height:26px;background:#d4d4d4"></div>
<div class="t" style="left:104px;top:493px;font-size:14px;letter-spacing:0.36px">17/07/2023</div>
<div class="t" style="left:250px;top:493px;font-size:14px">PCT00003-170723</div>
<div class="t" style="left:379px;top:493px;font-size:14px;letter-spacing:-0.13px">Nguyễn Hoàng Thiện</div>
<div class="t" style="left:579px;top:493px;font-size:14px;letter-spacing:-0.13px">Chi trả tiền nhà cung cấp</div>
<div class="t" style="left:1153px;top:493px;width:320px;text-align:right;font-size:14px;letter-spacing:0.34px;padding-right:0">830,000</div>
<div class="t" style="left:1481px;top:493px;font-size:14px;letter-spacing:-0.13px">MekongSoft</div>
<div style="left:7px;top:513px;width:50px;height:1px;background:#a9a9a9"></div>
<div class="t" style="left:14px;top:495px;font-size:13px;font-weight:bold;letter-spacing:0.8px">4</div>
<div style="left:99px;top:513px;width:1793px;height:1px;background:#d4d4d4"></div>
<div style="left:78px;top:513px;width:1px;height:26px;background:#d4d4d4"></div>
<div style="left:99px;top:513px;width:1px;height:26px;background:#d4d4d4"></div>
<div style="left:245px;top:513px;width:1px;height:26px;background:#d4d4d4"></div>
<div style="left:374px;top:513px;width:1px;height:26px;background:#d4d4d4"></div>
<div style="left:574px;top:513px;width:1px;height:26px;background:#d4d4d4"></div>
<div style="left:1153px;top:513px;width:1px;height:26px;background:#d4d4d4"></div>
<div style="left:1476px;top:513px;width:1px;height:26px;background:#d4d4d4"></div>
<div style="left:1669px;top:513px;width:1px;height:26px;background:#d4d4d4"></div>
<div class="t" style="left:104px;top:519px;font-size:14px;letter-spacing:0.36px">13/10/2023</div>
<div class="t" style="left:250px;top:519px;font-size:14px">PCT00004-131023</div>
<div class="t" style="left:379px;top:519px;font-size:14px;letter-spacing:-0.13px">Chị Hiền</div>
<div class="t" style="left:579px;top:519px;font-size:14px;letter-spacing:-0.13px">Chi trả tiền nhà cung cấp</div>
<div class="t" style="left:1153px;top:519px;width:320px;text-align:right;font-size:14px;letter-spacing:0.34px;padding-right:0">4,582,000</div>
<div class="t" style="left:1481px;top:519px;font-size:14px;letter-spacing:-0.13px">Tiền mặt</div>
<div style="left:7px;top:539px;width:50px;height:1px;background:#a9a9a9"></div>
<div class="t" style="left:14px;top:521px;font-size:13px;font-weight:bold;letter-spacing:0.8px">5</div>
<div style="left:99px;top:539px;width:1793px;height:1px;background:#d4d4d4"></div>
<div style="left:78px;top:539px;width:1px;height:26px;background:#d4d4d4"></div>
<div style="left:99px;top:539px;width:1px;height:26px;background:#d4d4d4"></div>
<div style="left:245px;top:539px;width:1px;height:26px;background:#d4d4d4"></div>
<div style="left:374px;top:539px;width:1px;height:26px;background:#d4d4d4"></div>
<div style="left:574px;top:539px;width:1px;height:26px;background:#d4d4d4"></div>
<div style="left:1153px;top:539px;width:1px;height:26px;background:#d4d4d4"></div>
<div style="left:1476px;top:539px;width:1px;height:26px;background:#d4d4d4"></div>
<div style="left:1669px;top:539px;width:1px;height:26px;background:#d4d4d4"></div>
<div class="t" style="left:104px;top:545px;font-size:14px;letter-spacing:0.36px">13/10/2023</div>
<div class="t" style="left:250px;top:545px;font-size:14px">PCT00005-131023</div>
<div class="t" style="left:379px;top:545px;font-size:14px;letter-spacing:-0.13px">Công ty bánh kẹo SBT</div>
<div class="t" style="left:579px;top:545px;font-size:14px;letter-spacing:-0.13px">Chi trả tiền nhà cung cấp</div>
<div class="t" style="left:1153px;top:545px;width:320px;text-align:right;font-size:14px;letter-spacing:0.34px;padding-right:0">300,000,000</div>
<div class="t" style="left:1481px;top:545px;font-size:14px;letter-spacing:-0.13px">Tiền mặt</div>
<div style="left:99px;top:565px;width:1793px;height:1px;background:#a4a4a4"></div>
<div style="left:99px;top:566px;width:1793px;height:1px;background:#c4c4c4"></div>
<div style="left:7px;top:565px;width:50px;height:1px;background:#a9a9a9"></div>
<div class="t" style="left:14px;top:547px;font-size:13px;font-weight:bold;letter-spacing:0.8px">6</div>
<div class="h" style="left:100px;top:567px;width:1792px;height:32px;"></div>
<div style="left:78px;top:565px;width:1px;height:34px;background:#d4d4d4"></div>
<div style="left:99px;top:565px;width:1px;height:34px;background:#d4d4d4"></div>
<div style="left:1155px;top:569px;width:321px;height:28px;background:#fff"></div>
<div style="left:1155px;top:569px;width:321px;height:1px;background:repeating-linear-gradient(90deg,#b4b4b4 0 3px,transparent 3px 6px)"></div>
<div style="left:1155px;top:596px;width:321px;height:1px;background:repeating-linear-gradient(90deg,#b4b4b4 0 3px,transparent 3px 6px)"></div>
<div style="left:1155px;top:569px;width:1px;height:28px;background:repeating-linear-gradient(180deg,#b4b4b4 0 3px,transparent 3px 6px)"></div>
<div style="left:1475px;top:569px;width:1px;height:28px;background:repeating-linear-gradient(180deg,#b4b4b4 0 3px,transparent 3px 6px)"></div>
<div class="t" style="left:1155px;top:578px;width:317px;text-align:right;font-size:12.6px;letter-spacing:0.95px;font-weight:bold;color:#ff00ff">905,412,000</div>
<div style="left:78px;top:599px;width:1814px;height:1px;background:#d4d4d4"></div>
<div style="left:7px;top:599px;width:50px;height:1px;background:#a9a9a9"></div>
<div class="t" style="left:14px;top:577px;font-size:13px;font-weight:bold;letter-spacing:0.8px">6</div>
<div style="left:78px;top:599px;width:1814px;height:1px;background:#d4d4d4"></div>
<div style="left:78px;top:599px;width:1px;height:26px;background:#d4d4d4"></div>
<svg style="position:absolute;left:85px;top:611px" width="10" height="6" viewBox="0 0 10 6"><path d="M0.5 0.5 H8.5 L4.5 5 Z" fill="#000"/></svg>
<div class="t" style="left:102px;top:606px;font-size:13.25px;font-weight:bold;color:#0000ff">Nội dung: Tiền đặt hàng NCC</div>
<div style="left:7px;top:625px;width:50px;height:1px;background:#a9a9a9"></div>
<div style="left:99px;top:625px;width:1793px;height:1px;background:#d4d4d4"></div>
<div style="left:78px;top:625px;width:1px;height:26px;background:#d4d4d4"></div>
<div style="left:99px;top:625px;width:1px;height:26px;background:#d4d4d4"></div>
<div style="left:245px;top:625px;width:1px;height:26px;background:#d4d4d4"></div>
<div style="left:374px;top:625px;width:1px;height:26px;background:#d4d4d4"></div>
<div style="left:574px;top:625px;width:1px;height:26px;background:#d4d4d4"></div>
<div style="left:1153px;top:625px;width:1px;height:26px;background:#d4d4d4"></div>
<div style="left:1476px;top:625px;width:1px;height:26px;background:#d4d4d4"></div>
<div style="left:1669px;top:625px;width:1px;height:26px;background:#d4d4d4"></div>
<div class="t" style="left:104px;top:631px;font-size:14px;letter-spacing:0.36px">17/07/2023</div>
<div class="t" style="left:250px;top:631px;font-size:14px">DHN00003-170723</div>
<div class="t" style="left:379px;top:631px;font-size:14px;letter-spacing:-0.13px">Nguyễn Hoàng Thiện</div>
<div class="t" style="left:579px;top:631px;font-size:14px;letter-spacing:-0.13px">Tiền đặt hàng NCC</div>
<div class="t" style="left:1153px;top:631px;width:320px;text-align:right;font-size:14px;letter-spacing:0.34px;padding-right:0">200,000</div>
<div class="t" style="left:1481px;top:631px;font-size:14px;letter-spacing:-0.13px">MekongSoft</div>
<div style="left:99px;top:651px;width:1793px;height:1px;background:#a4a4a4"></div>
<div style="left:99px;top:652px;width:1793px;height:1px;background:#c4c4c4"></div>
<div style="left:7px;top:651px;width:50px;height:1px;background:#a9a9a9"></div>
<div class="t" style="left:14px;top:633px;font-size:13px;font-weight:bold;letter-spacing:0.8px">7</div>
<div class="h" style="left:100px;top:653px;width:1792px;height:32px;"></div>
<div style="left:78px;top:651px;width:1px;height:34px;background:#d4d4d4"></div>
<div style="left:99px;top:651px;width:1px;height:34px;background:#d4d4d4"></div>
<div style="left:1155px;top:655px;width:321px;height:28px;background:#fff"></div>
<div style="left:1155px;top:655px;width:321px;height:1px;background:repeating-linear-gradient(90deg,#b4b4b4 0 3px,transparent 3px 6px)"></div>
<div style="left:1155px;top:682px;width:321px;height:1px;background:repeating-linear-gradient(90deg,#b4b4b4 0 3px,transparent 3px 6px)"></div>
<div style="left:1155px;top:655px;width:1px;height:28px;background:repeating-linear-gradient(180deg,#b4b4b4 0 3px,transparent 3px 6px)"></div>
<div style="left:1475px;top:655px;width:1px;height:28px;background:repeating-linear-gradient(180deg,#b4b4b4 0 3px,transparent 3px 6px)"></div>
<div class="t" style="left:1155px;top:664px;width:317px;text-align:right;font-size:12.6px;letter-spacing:0.95px;font-weight:bold;color:#ff00ff">200,000</div>
<div style="left:78px;top:685px;width:1814px;height:1px;background:#d4d4d4"></div>
<div style="left:7px;top:685px;width:50px;height:1px;background:#a9a9a9"></div>
<div class="t" style="left:14px;top:663px;font-size:13px;font-weight:bold;letter-spacing:0.8px">7</div>
<div style="left:78px;top:685px;width:1814px;height:2px;background:#a9a9a9"></div>
<div class="h" style="left:79px;top:687px;width:1813px;height:32px;"></div>
<div style="left:78px;top:685px;width:1px;height:34px;background:#d4d4d4"></div>
<div style="left:1155px;top:689px;width:321px;height:28px;background:#fff"></div>
<div style="left:1155px;top:689px;width:321px;height:1px;background:repeating-linear-gradient(90deg,#b4b4b4 0 3px,transparent 3px 6px)"></div>
<div style="left:1155px;top:716px;width:321px;height:1px;background:repeating-linear-gradient(90deg,#b4b4b4 0 3px,transparent 3px 6px)"></div>
<div style="left:1155px;top:689px;width:1px;height:28px;background:repeating-linear-gradient(180deg,#b4b4b4 0 3px,transparent 3px 6px)"></div>
<div style="left:1475px;top:689px;width:1px;height:28px;background:repeating-linear-gradient(180deg,#b4b4b4 0 3px,transparent 3px 6px)"></div>
<div class="t" style="left:1155px;top:698px;width:317px;text-align:right;font-size:12.6px;letter-spacing:0.95px;font-weight:bold;color:#ff00ff">906,212,000</div>
<div style="left:57px;top:719px;width:1835px;height:1px;background:#d4d4d4"></div>
<div style="left:7px;top:719px;width:50px;height:1px;background:#a9a9a9"></div>
<div class="t" style="left:14px;top:697px;font-size:13px;font-weight:bold;letter-spacing:0.8px">7</div>
<svg style="position:absolute;left:64px;top:732px" width="10" height="6" viewBox="0 0 10 6"><path d="M0.5 0.5 H8.5 L4.5 5 Z" fill="#000"/></svg>
<div class="t" style="left:81px;top:727px;font-size:12.9px;font-weight:bold;color:#0000ff">Loại: Thu</div>
<div style="left:7px;top:745px;width:50px;height:1px;background:#a9a9a9"></div>
<div style="left:78px;top:745px;width:1814px;height:1px;background:#d4d4d4"></div>
<div style="left:78px;top:745px;width:1px;height:26px;background:#d4d4d4"></div>
<svg style="position:absolute;left:85px;top:757px" width="10" height="6" viewBox="0 0 10 6"><path d="M0.5 0.5 H8.5 L4.5 5 Z" fill="#000"/></svg>
<div class="t" style="left:102px;top:752px;font-size:13.25px;font-weight:bold;color:#0000ff">Nội dung: Bán hàng thu tiền ngay</div>
<div style="left:7px;top:771px;width:50px;height:1px;background:#a9a9a9"></div>
<div style="left:99px;top:771px;width:1793px;height:1px;background:#d4d4d4"></div>
<div style="left:78px;top:771px;width:1px;height:26px;background:#d4d4d4"></div>
<div style="left:99px;top:771px;width:1px;height:26px;background:#d4d4d4"></div>
<div style="left:245px;top:771px;width:1px;height:26px;background:#d4d4d4"></div>
<div style="left:374px;top:771px;width:1px;height:26px;background:#d4d4d4"></div>
<div style="left:574px;top:771px;width:1px;height:26px;background:#d4d4d4"></div>
<div style="left:1153px;top:771px;width:1px;height:26px;background:#d4d4d4"></div>
<div style="left:1476px;top:771px;width:1px;height:26px;background:#d4d4d4"></div>
<div style="left:1669px;top:771px;width:1px;height:26px;background:#d4d4d4"></div>
<div class="t" style="left:104px;top:777px;font-size:14px;letter-spacing:0.36px">17/07/2023</div>
<div class="t" style="left:250px;top:777px;font-size:14px">PBH00004-170723</div>
<div class="t" style="left:379px;top:777px;font-size:14px;letter-spacing:-0.13px">Nguyễn Hoàng Thiện</div>
<div class="t" style="left:579px;top:777px;font-size:14px;letter-spacing:-0.13px">Bán hàng thu tiền ngay</div>
<div class="t" style="left:1153px;top:777px;width:320px;text-align:right;font-size:14px;letter-spacing:0.34px;padding-right:0">6,600,000</div>
<div class="t" style="left:1481px;top:777px;font-size:14px;letter-spacing:-0.13px">MekongSoft</div>
<div style="left:7px;top:797px;width:50px;height:1px;background:#a9a9a9"></div>
<div class="t" style="left:14px;top:779px;font-size:13px;font-weight:bold;letter-spacing:0.8px">8</div>
<div style="left:99px;top:797px;width:1793px;height:1px;background:#d4d4d4"></div>
<div style="left:78px;top:797px;width:1px;height:26px;background:#d4d4d4"></div>
<div style="left:99px;top:797px;width:1px;height:26px;background:#d4d4d4"></div>
<div style="left:245px;top:797px;width:1px;height:26px;background:#d4d4d4"></div>
<div style="left:374px;top:797px;width:1px;height:26px;background:#d4d4d4"></div>
<div style="left:574px;top:797px;width:1px;height:26px;background:#d4d4d4"></div>
<div style="left:1153px;top:797px;width:1px;height:26px;background:#d4d4d4"></div>
<div style="left:1476px;top:797px;width:1px;height:26px;background:#d4d4d4"></div>
<div style="left:1669px;top:797px;width:1px;height:26px;background:#d4d4d4"></div>
<div class="t" style="left:104px;top:803px;font-size:14px;letter-spacing:0.36px">22/08/2023</div>
<div class="t" style="left:250px;top:803px;font-size:14px">PBH00005-220823</div>
<div class="t" style="left:379px;top:803px;font-size:14px;letter-spacing:-0.13px">Chị Hiền</div>
<div class="t" style="left:579px;top:803px;font-size:14px;letter-spacing:-0.13px">Bán hàng thu tiền ngay</div>
<div class="t" style="left:1153px;top:803px;width:320px;text-align:right;font-size:14px;letter-spacing:0.34px;padding-right:0">60,000</div>
<div class="t" style="left:1481px;top:803px;font-size:14px;letter-spacing:-0.13px">Tiền mặt</div>
<div style="left:99px;top:823px;width:1793px;height:1px;background:#a4a4a4"></div>
<div style="left:99px;top:824px;width:1793px;height:1px;background:#c4c4c4"></div>
<div style="left:7px;top:823px;width:50px;height:1px;background:#a9a9a9"></div>
<div class="t" style="left:14px;top:805px;font-size:13px;font-weight:bold;letter-spacing:0.8px">9</div>
<div class="h" style="left:100px;top:825px;width:1792px;height:32px;"></div>
<div style="left:78px;top:823px;width:1px;height:34px;background:#d4d4d4"></div>
<div style="left:99px;top:823px;width:1px;height:34px;background:#d4d4d4"></div>
<div style="left:1155px;top:827px;width:321px;height:28px;background:#fff"></div>
<div style="left:1155px;top:827px;width:321px;height:1px;background:repeating-linear-gradient(90deg,#b4b4b4 0 3px,transparent 3px 6px)"></div>
<div style="left:1155px;top:854px;width:321px;height:1px;background:repeating-linear-gradient(90deg,#b4b4b4 0 3px,transparent 3px 6px)"></div>
<div style="left:1155px;top:827px;width:1px;height:28px;background:repeating-linear-gradient(180deg,#b4b4b4 0 3px,transparent 3px 6px)"></div>
<div style="left:1475px;top:827px;width:1px;height:28px;background:repeating-linear-gradient(180deg,#b4b4b4 0 3px,transparent 3px 6px)"></div>
<div class="t" style="left:1155px;top:836px;width:317px;text-align:right;font-size:12.6px;letter-spacing:0.95px;font-weight:bold;color:#ff00ff">6,660,000</div>
<div style="left:78px;top:857px;width:1814px;height:1px;background:#d4d4d4"></div>
<div style="left:7px;top:857px;width:50px;height:1px;background:#a9a9a9"></div>
<div class="t" style="left:14px;top:835px;font-size:13px;font-weight:bold;letter-spacing:0.8px">9</div>
<div style="left:78px;top:857px;width:1814px;height:1px;background:#d4d4d4"></div>
<div style="left:78px;top:857px;width:1px;height:26px;background:#d4d4d4"></div>
<svg style="position:absolute;left:85px;top:869px" width="10" height="6" viewBox="0 0 10 6"><path d="M0.5 0.5 H8.5 L4.5 5 Z" fill="#000"/></svg>
<div class="t" style="left:102px;top:864px;font-size:13.25px;font-weight:bold;color:#0000ff">Nội dung: Tiền đặt cọc hàng</div>
<div style="left:7px;top:883px;width:50px;height:1px;background:#a9a9a9"></div>
<div style="left:99px;top:883px;width:1793px;height:1px;background:#d4d4d4"></div>
<div style="left:78px;top:883px;width:1px;height:26px;background:#d4d4d4"></div>
<div style="left:99px;top:883px;width:1px;height:26px;background:#d4d4d4"></div>
<div style="left:245px;top:883px;width:1px;height:26px;background:#d4d4d4"></div>
<div style="left:374px;top:883px;width:1px;height:26px;background:#d4d4d4"></div>
<div style="left:574px;top:883px;width:1px;height:26px;background:#d4d4d4"></div>
<div style="left:1153px;top:883px;width:1px;height:26px;background:#d4d4d4"></div>
<div style="left:1476px;top:883px;width:1px;height:26px;background:#d4d4d4"></div>
<div style="left:1669px;top:883px;width:1px;height:26px;background:#d4d4d4"></div>
<div class="t" style="left:104px;top:889px;font-size:14px;letter-spacing:0.36px">17/07/2023</div>
<div class="t" style="left:250px;top:889px;font-size:14px">KDH00002-170723</div>
<div class="t" style="left:379px;top:889px;font-size:14px;letter-spacing:-0.13px">Nguyễn Hoàng Thiện</div>
<div class="t" style="left:579px;top:889px;font-size:14px;letter-spacing:-0.13px">Tiền đặt cọc hàng</div>
<div class="t" style="left:1153px;top:889px;width:320px;text-align:right;font-size:14px;letter-spacing:0.34px;padding-right:0">490,000</div>
<div class="t" style="left:1481px;top:889px;font-size:14px;letter-spacing:-0.13px">MekongSoft</div>
<div class="t" style="left:1674px;top:889px;font-size:14px;letter-spacing:-0.13px">ok chuyển từ báo giá sang</div>
<div style="left:99px;top:909px;width:1793px;height:1px;background:#a4a4a4"></div>
<div style="left:99px;top:910px;width:1793px;height:1px;background:#c4c4c4"></div>
<div style="left:7px;top:909px;width:50px;height:1px;background:#a9a9a9"></div>
<div class="t" style="left:14px;top:891px;font-size:13px;font-weight:bold;letter-spacing:0.8px">10</div>
<div class="h" style="left:100px;top:911px;width:1792px;height:32px;"></div>
<div style="left:78px;top:909px;width:1px;height:34px;background:#d4d4d4"></div>
<div style="left:99px;top:909px;width:1px;height:34px;background:#d4d4d4"></div>
<div style="left:1155px;top:913px;width:321px;height:28px;background:#fff"></div>
<div style="left:1155px;top:913px;width:321px;height:1px;background:repeating-linear-gradient(90deg,#b4b4b4 0 3px,transparent 3px 6px)"></div>
<div style="left:1155px;top:940px;width:321px;height:1px;background:repeating-linear-gradient(90deg,#b4b4b4 0 3px,transparent 3px 6px)"></div>
<div style="left:1155px;top:913px;width:1px;height:28px;background:repeating-linear-gradient(180deg,#b4b4b4 0 3px,transparent 3px 6px)"></div>
<div style="left:1475px;top:913px;width:1px;height:28px;background:repeating-linear-gradient(180deg,#b4b4b4 0 3px,transparent 3px 6px)"></div>
<div class="t" style="left:1155px;top:922px;width:317px;text-align:right;font-size:12.6px;letter-spacing:0.95px;font-weight:bold;color:#ff00ff">490,000</div>
<div style="left:78px;top:943px;width:1814px;height:1px;background:#d4d4d4"></div>
<div style="left:7px;top:943px;width:50px;height:1px;background:#a9a9a9"></div>
<div class="t" style="left:14px;top:921px;font-size:13px;font-weight:bold;letter-spacing:0.8px">10</div>
<div style="left:78px;top:943px;width:1814px;height:1px;background:#d4d4d4"></div>
<div style="left:78px;top:943px;width:1px;height:26px;background:#d4d4d4"></div>
<svg style="position:absolute;left:85px;top:955px" width="10" height="6" viewBox="0 0 10 6"><path d="M0.5 0.5 H8.5 L4.5 5 Z" fill="#000"/></svg>
<div class="t" style="left:102px;top:950px;font-size:13.25px;font-weight:bold;color:#0000ff">Nội dung: Thu công nợ khách hàng</div>
<div style="left:7px;top:969px;width:50px;height:1px;background:#a9a9a9"></div>
<div style="left:57px;top:298px;width:1px;height:670px;background:#a9a9a9"></div>
<div style="left:7px;top:968px;width:1903px;height:1px;background:#a9a9a9"></div>
<div class="h" style="left:8px;top:969px;width:1901px;height:33px;"></div>
<div style="left:1155px;top:971px;width:321px;height:29px;background:#fff"></div>
<div style="left:1155px;top:971px;width:321px;height:1px;background:repeating-linear-gradient(90deg,#b4b4b4 0 3px,transparent 3px 6px)"></div>
<div style="left:1155px;top:999px;width:321px;height:1px;background:repeating-linear-gradient(90deg,#b4b4b4 0 3px,transparent 3px 6px)"></div>
<div style="left:1155px;top:971px;width:1px;height:29px;background:repeating-linear-gradient(180deg,#b4b4b4 0 3px,transparent 3px 6px)"></div>
<div style="left:1475px;top:971px;width:1px;height:29px;background:repeating-linear-gradient(180deg,#b4b4b4 0 3px,transparent 3px 6px)"></div>
<div class="t" style="left:1155px;top:979px;width:317px;text-align:right;font-size:14.3px;letter-spacing:1.0px;font-weight:bold;color:#ff0000">-885,028,000</div>
<div style="left:1892px;top:756px;width:1px;height:212px;background:repeating-linear-gradient(180deg,#d4d4d4 0 3px,transparent 3px 6px)"></div>
<div class="h" style="left:1892px;top:288px;width:16px;height:469px;border:1px solid #a9a9a9"></div>
<svg style="position:absolute;left:1896px;top:276px" width="10" height="6" viewBox="0 0 10 6"><path d="M0.5 5.5 H8.5 L4.5 1 Z" fill="#000"/></svg>
<svg style="position:absolute;left:1896px;top:957px" width="10" height="6" viewBox="0 0 10 6"><path d="M0.5 0.5 H8.5 L4.5 5 Z" fill="#000"/></svg>
<div style="left:2px;top:1007px;width:1914px;height:1px;background:repeating-linear-gradient(90deg,#cfcfcf 0 3px,transparent 3px 6px)"></div>
<div style="left:0px;top:1013px;width:1920px;height:1px;background:repeating-linear-gradient(90deg,#bdbdbd 0 3px,transparent 3px 6px)"></div>
<div style="left:0px;top:1040px;width:1920px;height:1px;background:#cfe0ee"></div>
<div class="t" style="left:8px;top:1022px;font-size:11.72px;font-weight:bold">Chào mừng: Administrator đến với phần mềm MekongSoft</div>
<div class="t" style="left:347px;top:1020px;font-size:12px;color:#a8b8d0">|</div>
<div class="t" style="left:363px;top:1022px;font-size:11.8px;font-weight:bold">Version: 4.2.0</div>
<div class="t" style="left:450px;top:1020px;font-size:12px;color:#a8b8d0">|</div>
<div class="t" style="left:466px;top:1022px;font-size:11.8px;font-weight:bold;color:#ff0000">Ngày: 13/10/2023 2:12:09 CH</div>
<div style="left:1614px;top:1014px;width:1px;height:26px;background:repeating-linear-gradient(180deg,#bdbdbd 0 3px,transparent 3px 6px)"></div>
<div class="t" style="left:1624px;top:1023px;font-size:11.8px;font-weight:bold">@2023 MekongSoft. Thông tin hỗ trợ: 0901 000 508</div>
<svg style="position:absolute;left:798px;top:613px" width="14" height="21" viewBox="0 0 14 21"><path d="M0.5 0.5 L0.5 16 L4.3 12.6 L7.3 18.6 L9.6 17.5 L6.8 11.8 L11.8 11.8 Z" fill="#fff" stroke="#111" stroke-width="1.1" stroke-linejoin="round"/></svg>
</body></html>
